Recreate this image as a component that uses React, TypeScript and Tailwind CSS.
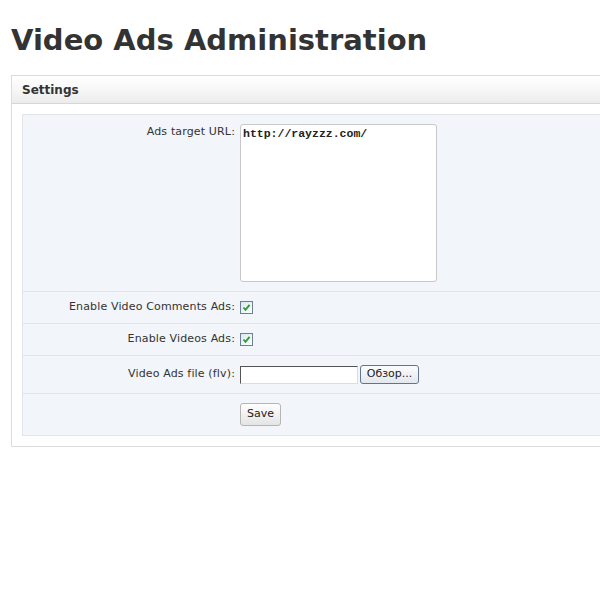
import React from "react";

function Check() {
  return (
    <span className="inline-flex h-[13px] w-[13px] items-center justify-center border border-[#6c7f98] bg-gradient-to-br from-[#dfe6ee] to-[#ffffff]">
      <svg width="9" height="9" viewBox="0 0 9 9">
        <path d="M1.5 4.5 L3.5 6.8 L7.6 1.8" fill="none" stroke="#27a327" strokeWidth="1.9" />
      </svg>
    </span>
  );
}

function Row({
  label,
  children,
  className,
}: {
  label?: string;
  children: React.ReactNode;
  className: string;
}) {
  return (
    <div className={`flex border-b border-[#e1e5ea] ${className}`}>
      <div className="w-[217px] shrink-0 pr-[5px] text-right tracking-[0.15px]">{label}</div>
      <div className="flex items-start">{children}</div>
    </div>
  );
}

export default function App() {
  return (
    <div
      className="h-[600px] w-[600px] overflow-hidden bg-white text-[#333]"
      style={{ fontFamily: '"DejaVu Sans", Verdana, sans-serif' }}
    >
      <h1 className="pl-[11px] pt-[22px] text-[29px] font-bold leading-[36px] text-[#333]">
        Video Ads Administration
      </h1>

      <div className="ml-[11px] mt-[17px] w-[620px] border border-[#dcdcdc] bg-white pb-[10px]">
        <div className="flex h-[28px] items-center border-b border-[#d6d6d6] bg-gradient-to-b from-[#ffffff] via-[#f7f7f7] to-[#ececec] pl-[10px] text-[12px] font-bold text-[#333]">
          Settings
        </div>

        <div className="ml-[10px] mt-[10px] border-t border-l border-[#e1e5ea] bg-[#f2f5f9] text-[11px] text-[#333]">
          <Row label="Ads target URL:" className="h-[177px] pt-[9px]">
            <textarea
              readOnly
              defaultValue="http://rayzzz.com/"
              className="h-[158px] w-[197px] resize-none rounded-[3px] border border-[#c8c8c8] bg-white px-[2px] pt-[2px] text-[11.5px] font-bold leading-[14px] text-[#222] outline-none"
              style={{ fontFamily: '"Liberation Mono", "Courier New", monospace' }}
            />
          </Row>
          <Row label="Enable Video Comments Ads:" className="h-[32px] items-center">
            <Check />
          </Row>
          <Row label="Enable Videos Ads:" className="h-[32px] items-center">
            <Check />
          </Row>
          <Row label="Video Ads file (flv):" className="h-[38px] items-center">
            <div className="flex items-center gap-[2px]">
              <span className="h-[18px] w-[118px] border border-t-[#555] border-l-[#555] border-r-[#ddd] border-b-[#ddd] bg-white" />
              <span className="flex h-[19px] w-[59px] items-center justify-center rounded-[3px] border border-[#5f7590] bg-gradient-to-b from-[#fbfcfd] to-[#e3e8ee] text-[11px] text-[#222]">
                Обзор...
              </span>
            </div>
          </Row>
          <Row className="h-[42px] items-center">
            <span className="flex h-[23px] w-[41px] items-center justify-center rounded-[3px] border border-[#b5b5b5] bg-gradient-to-b from-[#ffffff] to-[#e4e4e4] text-[11px] text-[#222]">
              Save
            </span>
          </Row>
        </div>
      </div>
    </div>
  );
}
